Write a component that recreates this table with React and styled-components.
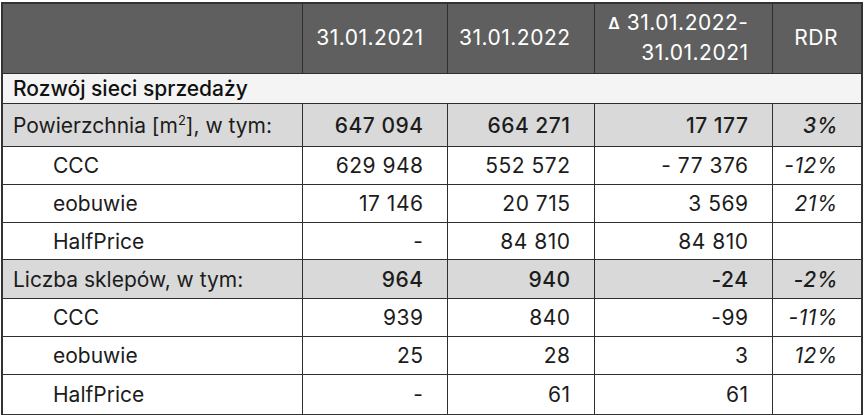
import React from "react";
import styled, { createGlobalStyle } from "styled-components";

const GlobalStyle = createGlobalStyle`
  body {
    margin: 0;
    background: #ffffff;
    font-family: Inter, "Open Sans", sans-serif;
  }
`;

const rows = [
  { label: "Powierzchnia", sup: true, values: ["647 094", "664 271", "17 177", "3%"], total: true, height: 43 },
  { label: "CCC", values: ["629 948", "552 572", "- 77 376", "-12%"] },
  { label: "eobuwie", values: ["17 146", "20 715", "3 569", "21%"] },
  { label: "HalfPrice", values: ["-", "84 810", "84 810", ""], height: 37 },
  { label: "Liczba sklepów, w tym:", values: ["964", "940", "-24", "-2%"], total: true, height: 39 },
  { label: "CCC", values: ["939", "840", "-99", "-11%"] },
  { label: "eobuwie", values: ["25", "28", "3", "12%"] },
  { label: "HalfPrice", values: ["-", "61", "61", ""], height: 40 },
];

export default function App() {
  return (
    <>
      <GlobalStyle />
      <Page>
        <Table>
          <colgroup>
            <col style={{ width: 300 }} />
            <col style={{ width: 145 }} />
            <col style={{ width: 147 }} />
            <col style={{ width: 178 }} />
            <col style={{ width: 90 }} />
          </colgroup>
          <thead>
            <tr>
              <HeadCell />
              <HeadCell>31.01.2021</HeadCell>
              <HeadCell>31.01.2022</HeadCell>
              <HeadCell>
                <Delta>Δ</Delta> 31.01.2022-
                <br />
                31.01.2021
              </HeadCell>
              <HeadCell>RDR</HeadCell>
            </tr>
          </thead>
          <tbody>
            <SectionRow>
              <td colSpan={5}>Rozwój sieci sprzedaży</td>
            </SectionRow>
            {rows.map((row, i) => (
              <Row key={i} $total={row.total} $height={row.height}>
                <Label $sub={!row.total}>
                  {row.sup ? (
                    <>
                      Powierzchnia [m<sup>2</sup>], w tym:
                    </>
                  ) : (
                    row.label
                  )}
                </Label>
                {row.values.map((v, j) => (
                  <Num key={j} $total={row.total} $italic={j === 3}>
                    {v}
                  </Num>
                ))}
              </Row>
            ))}
          </tbody>
        </Table>
      </Page>
    </>
  );
}

const Page = styled.div`
  padding: 2px 3px 0 1px;
`;

const Table = styled.table`
  width: 862px;
  table-layout: fixed;
  border-collapse: collapse;
  border: 2px solid #333333;
  font-size: 21px;
  color: #1c1c1c;
`;

const HeadCell = styled.th`
  height: 67px;
  padding: 0 23px 2px 0;
  background: #5f5f5f;
  color: #ffffff;
  font-weight: 400;
  text-align: right;
  line-height: 29px;
  letter-spacing: 0.5px;
  border: 1.5px solid #2f2f2f;
`;

const Delta = styled.span`
  font-size: 16px;
  font-weight: 600;
  vertical-align: 1px;
`;

const SectionRow = styled.tr`
  height: 30px;
  background: #f4f4f4;

  td {
    padding: 0 10px;
    font-weight: 500;
    color: #111111;
    border: 1.5px solid #2f2f2f;
  }
`;

const Row = styled.tr`
  height: ${(p) => p.$height || 38}px;
  background: ${(p) => (p.$total ? "#d9d9d9" : "#ffffff")};
`;

const Label = styled.td`
  padding: 0 0 0 ${(p) => (p.$sub ? 50 : 10)}px;
  border: 1.5px solid #2f2f2f;
  white-space: nowrap;

  sup {
    font-size: 13px;
    line-height: 0;
    vertical-align: 8px;
  }
`;

const Num = styled.td`
  padding: 0 23px 0 0;
  text-align: right;
  border: 1.5px solid #2f2f2f;
  font-weight: ${(p) => (p.$total ? 500 : 400)};
  font-style: ${(p) => (p.$italic ? "italic" : "normal")};
  letter-spacing: 0.5px;
  white-space: nowrap;
`;
